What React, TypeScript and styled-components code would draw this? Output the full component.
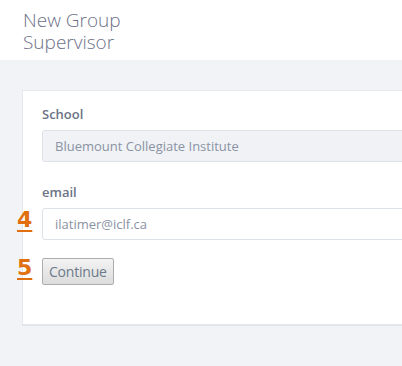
import styled, { createGlobalStyle } from 'styled-components';

// styles
const GlobalStyle = createGlobalStyle`
  html, body {
    margin: 0;
    padding: 0;
    background: #f2f3f7;
    overflow: hidden;
  }
  body {
    font-family: "Open Sans", "Noto Sans", sans-serif;
  }
`;

const Header = styled.header`
  height: 60px;
  background: #ffffff;
  padding: 9px 0 0 23px;
  box-sizing: border-box;
`;

const Title = styled.h1`
  margin: 0;
  font-family: "Open Sans", sans-serif;
  font-weight: 300;
  font-size: 19px;
  line-height: 22px;
  color: #6d7188;
  width: 140px;
`;

const Page = styled.main`
  padding: 30px 0 40px 22px;
`;

const Card = styled.section`
  width: 440px;
  background: #ffffff;
  border: 1px solid #e6e8ee;
  border-bottom: 2px solid #e3e5ea;
  padding: 14px 0 39px 19px;
  box-sizing: border-box;
`;

const Group = styled.div<{ $gap?: number }>`
  position: relative;
  width: 380px;
  margin-bottom: ${p => p.$gap ?? 0}px;
`;

const Label = styled.label`
  display: block;
  font-size: 13px;
  font-weight: 600;
  color: #6b7385;
  margin-bottom: 7px;
  line-height: 18px;
`;

const Input = styled.input<{ $readonly?: boolean }>`
  display: block;
  width: 100%;
  height: 32px;
  box-sizing: border-box;
  padding: 0 12px;
  font-family: "Open Sans", sans-serif;
  font-size: 13px;
  color: #8a92a3;
  background: ${p => (p.$readonly ? '#f0f2f6' : '#ffffff')};
  border: 1px solid #dde2e8;
  border-radius: 3px;
  outline: none;
`;

// orange step numbers laid over the left margin of the card
const StepMark = styled.span<{ $top: number }>`
  position: absolute;
  left: -25px;
  top: ${p => p.$top}px;
  font-family: "DejaVu Sans", sans-serif;
  font-size: 22px;
  font-weight: 700;
  line-height: 24px;
  color: #e0700f;
  text-decoration: underline;
  text-decoration-thickness: 2px;
  text-underline-offset: 3px;
`;

const Button = styled.button`
  height: 27px;
  padding: 0 6px;
  font-family: "Open Sans", sans-serif;
  font-size: 14px;
  letter-spacing: -0.2px;
  color: #6c7a8a;
  background: linear-gradient(#f3f3f3, #dcdcdc);
  border: 1px solid #adadad;
  border-radius: 2px;
  cursor: pointer;
`;

// component
export default function App() {
  return (
    <>
      <GlobalStyle />
      <Header>
        <Title>New Group Supervisor</Title>
      </Header>
      <Page>
        <Card>
          <Group $gap={21}>
            <Label>School</Label>
            <Input $readonly readOnly value="Bluemount Collegiate Institute" />
          </Group>
          <Group $gap={18}>
            <Label>email</Label>
            <StepMark $top={25}>4</StepMark>
            <Input defaultValue="ilatimer@iclf.ca" />
          </Group>
          <Group>
            <StepMark $top={-2}>5</StepMark>
            <Button>Continue</Button>
          </Group>
        </Card>
      </Page>
    </>
  );
}
